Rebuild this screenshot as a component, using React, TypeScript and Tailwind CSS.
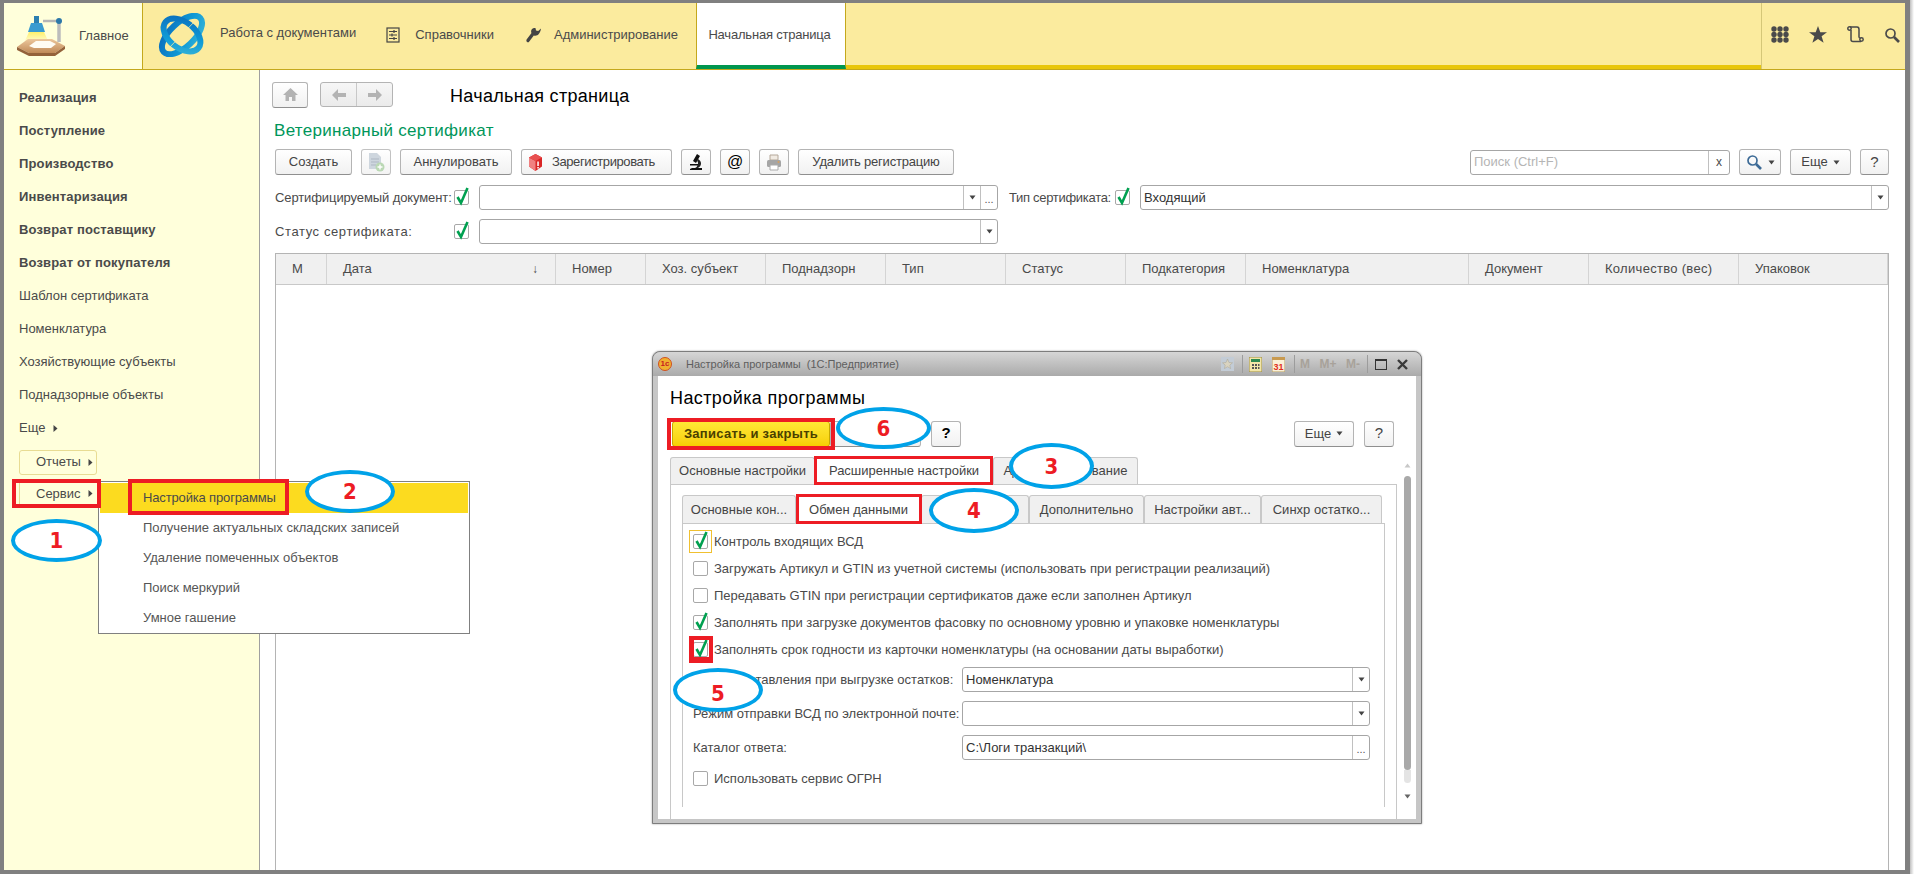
import { ReactNode } from "react";

const Caret = ({ className = "text-[#444]" }: { className?: string }) => (
  <svg width="7" height="5" viewBox="0 0 7 5" className={className}>
    <path d="M0.5 0.5h6L3.5 4.5z" fill="currentColor" />
  </svg>
);

const CaretRight = () => (
  <svg width="5" height="7" viewBox="0 0 5 7" className="text-[#444]">
    <path d="M0.5 0v7L4.5 3.5z" fill="currentColor" />
  </svg>
);

const CheckBox = ({ checked = false, className = "" }: { checked?: boolean; className?: string }) => (
  <span className={`relative block w-[15px] h-[15px] shrink-0 rounded-[2px] border border-[#a8a8a8] bg-white ${className}`}>
    {checked && (
      <svg width="17" height="20" viewBox="0 0 17 20" className="absolute left-[-1px] top-[-5px]">
        <path d="M3.500 11l3.500 6L13.500 2" fill="none" stroke="#00a050" strokeWidth="2.600" />
      </svg>
    )}
  </span>
);

const Btn = ({ className = "", children }: { className?: string; children: ReactNode }) => (
  <div
    className={`flex items-center justify-center shrink-0 h-[26px] rounded-[3px] border border-[#b4b4b4] border-b-[#8f8f8f] bg-gradient-to-b from-white to-[#f1f1f1] text-[#444] ${className}`}
  >
    {children}
  </div>
);

const Field = ({ className = "", value = "", kinds }: { className?: string; value?: string; kinds: string[] }) => (
  <div className={`flex h-[25px] items-stretch rounded-[3px] border border-[#a6a6a6] bg-white ${className}`}>
    <div className="flex-1 flex items-center pl-[3px] text-[#333]">{value}</div>
    {kinds.map((k) => (
      <div key={k} className="w-[17px] flex items-center justify-center border-l border-[#c0c0c0]">
        {k === "arrow" ? <Caret /> : <span className="text-[#555] text-[11px] leading-none mt-[4px]">...</span>}
      </div>
    ))}
  </div>
);

const Ellipse = ({ className, children }: { className: string; children: ReactNode }) => (
  <div
    className={`absolute flex items-center justify-center rounded-[50%] border-[4px] border-[#00a2e8] bg-white text-[#ed1c24] text-[22px] font-bold tracking-normal font-['DejaVu_Sans_Condensed','DejaVu_Sans',sans-serif] ${className}`}
  >
    {children}
  </div>
);

const Lamp = () => (
  <svg width="50" height="42" viewBox="0 0 50 42">
    <defs>
      <linearGradient id="wood" x1="0" y1="0" x2="0" y2="1">
        <stop offset="0" stopColor="#ecc79c" />
        <stop offset="1" stopColor="#c08a58" />
      </linearGradient>
      <linearGradient id="glow" x1="0" y1="0" x2="0" y2="1">
        <stop offset="0" stopColor="#fff06a" />
        <stop offset="1" stopColor="#fffde0" />
      </linearGradient>
    </defs>
    <path d="M27 6h16" stroke="#b5b5b5" strokeWidth="2.500" fill="none" />
    <path d="M43 6v21" stroke="#bcbcbc" strokeWidth="3.500" fill="none" />
    <circle cx="43" cy="6" r="3" fill="#2c78a8" />
    <path d="M18 1h5v7h-5z" fill="#2c7fb0" />
    <path d="M15 8h11l3 9H12z" fill="#3a9bd0" />
    <path d="M13 17h15l5 11H8z" fill="url(#glow)" />
    <path d="M1 32L12 24h24l13 7-10 7H13z" fill="url(#wood)" />
    <path d="M1 32l12 6h26l10-7v3l-10 7H13L1 35z" fill="#94623a" />
    <path d="M13 31l7-5h14l6 3-5 4H18z" fill="#fffdf4" />
  </svg>
);

const Orbit = () => (
  <svg width="48" height="44" viewBox="0 0 48 44">
    <defs>
      <linearGradient id="blue" x1="0" y1="0" x2="1" y2="1">
        <stop offset="0" stopColor="#0a6cbc" />
        <stop offset="0.6" stopColor="#0f9ad6" />
        <stop offset="1" stopColor="#38b4d6" />
      </linearGradient>
    </defs>
    <g fill="none" stroke="url(#blue)">
      <ellipse cx="24" cy="22" rx="25" ry="12" strokeWidth="6" transform="rotate(-43 24 22)" />
      <ellipse cx="24" cy="22" rx="21" ry="13" strokeWidth="6" transform="rotate(38 24 22)" />
    </g>
    <path d="M38 7L11 35" stroke="#fbeb9e" strokeWidth="0.800" />
  </svg>
);

const Directory = () => (
  <svg width="14" height="16" viewBox="0 0 14 16" fill="none" stroke="#444" strokeWidth="1.200">
    <rect x="1" y="1" width="12" height="14" />
    <path d="M3 4.500h8M3 8h8M3 11.500h8M8 3v3M6 6.500v3M8 10v3" />
  </svg>
);

const Wrench = () => (
  <svg width="16" height="16" viewBox="0 0 16 16">
    <path d="M15 1.500l-2.800 2.600-2.200-.6L9.600 1.200C7.500 0.300 5 1.800 5.100 4.400c0 .7.200 1.200.4 1.700L0.600 12.600c-.7 1 .2 3 2.100 2.600l5.100-6.700c3.500 1 6.400-1.500 7.200-7z" fill="#444" />
  </svg>
);

const DocPlus = () => (
  <svg width="18" height="20" viewBox="0 0 18 20">
    <path d="M2 1h8l4 4v12H2z" fill="#c3ccd6" />
    <path d="M4 7h8M4 10h8M4 13h5" stroke="#9aa7b5" />
    <circle cx="13" cy="15" r="4.500" fill="#a9cfa2" />
    <path d="M13 12.500v5M10.500 15h5" stroke="#fff" strokeWidth="1.400" />
  </svg>
);

const RedCube = () => (
  <svg width="15" height="17" viewBox="0 0 15 17">
    <path d="M7.500 0L14 3.500v9L7.500 17 1 12.500v-9z" fill="#d92525" />
    <path d="M1 3.500L7.500 7v10L1 12.500z" fill="#f08080" />
    <path d="M7.500 7L14 3.500 7.500 0 1 3.500z" fill="#e85050" />
    <path d="M9.300 7.500h1.500v4.500H9.300zM9.300 13h1.500v1.500H9.300z" fill="#fff" />
  </svg>
);

const Microscope = () => (
  <svg width="14" height="16" viewBox="0 0 14 16">
    <path d="M8 0l3 2-4 7-3-2zM3 14h10v2H1v-1z" fill="#111" />
    <path d="M9 5c4 2 4 7 0 9H6c3-1 4-6 2-7z" fill="#222" />
    <path d="M1 10h8v1.500H1z" fill="#111" />
  </svg>
);

const Printer = () => (
  <svg width="16" height="17" viewBox="0 0 16 17">
    <path d="M4 1h8v5H4z" fill="#f1ebe3" stroke="#b5a89a" />
    <rect x="1" y="6" width="14" height="7" rx="1.500" fill="#a5a5a5" />
    <path d="M4 11h8v5H4z" fill="#fff" stroke="#aaa" />
    <circle cx="12.500" cy="8" r="1" fill="#d8a060" />
  </svg>
);

const HomeIcon = () => (
  <svg width="15" height="15" viewBox="0 0 15 15">
    <path d="M7.500 1L15 8h-2.500v6h-3.500v-4H6v4H2.500V8H0z" fill="#b3b3b3" />
  </svg>
);

const ArrowIcon = ({ flip = false }: { flip?: boolean }) => (
  <svg width="14" height="12" viewBox="0 0 14 12" className={flip ? "rotate-180" : ""}>
    <path d="M0 6l6-6v4h8v4H6v4z" fill="#b3b3b3" />
  </svg>
);

const SearchIcon = ({ color = "#4a4a4a" }: { color?: string }) => (
  <svg width="16" height="16" viewBox="0 0 16 16" fill="none" stroke={color}>
    <circle cx="6.500" cy="6.500" r="4.500" strokeWidth="1.700" />
    <path d="M10 10l5 5" strokeWidth="2.600" />
  </svg>
);

const Grid = () => (
  <svg width="18" height="17" viewBox="0 0 18 17" fill="#4a4a4a">
    {[3, 9, 15].map((x) => [3, 8.5, 14].map((y) => <circle key={`${x}-${y}`} cx={x} cy={y} r="2.700" />))}
  </svg>
);

const Star = () => (
  <svg width="18" height="17" viewBox="0 0 18 17">
    <path d="M9 0l2.300 6.200H18l-5.400 4 2 6.600L9 13l-5.600 3.800 2-6.600-5.400-4h6.700z" fill="#4a4a4a" />
  </svg>
);

const Scroll = () => (
  <svg width="17" height="17" viewBox="0 0 17 17" fill="none" stroke="#4a4a4a" strokeWidth="1.500">
    <circle cx="2.500" cy="2.500" r="1.700" />
    <circle cx="14.500" cy="13.500" r="1.700" />
    <path d="M3 1h7c1.500 0 2 1 2 2.500V11c0 1 1 1 1.500 1M4 4v9.500C4 15 5 15.500 6 15.500h8" />
  </svg>
);

const columns = [
  { title: "М", cls: "w-[51px]" },
  { title: "Дата", cls: "w-[229px] justify-between pr-[17px]", extra: "↓" },
  { title: "Номер", cls: "w-[90px]" },
  { title: "Хоз. субъект", cls: "w-[120px]" },
  { title: "Поднадзорн", cls: "w-[120px]" },
  { title: "Тип", cls: "w-[120px]" },
  { title: "Статус", cls: "w-[120px]" },
  { title: "Подкатегория", cls: "w-[120px]" },
  { title: "Номенклатура", cls: "w-[223px]" },
  { title: "Документ", cls: "w-[120px]" },
  { title: "Количество (вес)", cls: "w-[150px] tracking-[0.3px]" },
  { title: "Упаковок", cls: "flex-1" },
];

const sideBold = ["Реализация", "Поступление", "Производство", "Инвентаризация", "Возврат поставщику", "Возврат от покупателя"];
const sideNormal = ["Шаблон сертификата", "Номенклатура", "Хозяйствующие субъекты", "Поднадзорные объекты"];
const menuItems = ["Получение актуальных складских записей", "Удаление помеченных объектов", "Поиск меркурий", "Умное гашение"];

const checks = [
  { text: "Загружать Артикул и GTIN из учетной системы (использовать при регистрации реализаций)", on: false },
  { text: "Передавать GTIN при регистрации сертификатов даже если заполнен Артикул", on: false },
  { text: "Заполнять при загрузке документов фасовку по основному уровню и упаковке номенклатуры", on: true },
];

const Tab = ({ className, children }: { className: string; children?: ReactNode }) => (
  <div className={`flex items-center justify-center border border-b-0 border-[#c8c8c8] bg-[#f0f0f0] rounded-t-[3px] text-[#444] ${className}`}>
    {children}
  </div>
);

const Dialog = () => (
  <div className="absolute left-[652px] top-[351px] w-[770px] h-[473px] flex flex-col rounded-t-[8px] border border-[#7d7d7d] bg-[#c6c6c6] shadow-[0_0_2px_#999]">
    <div className="h-[24px] flex items-center pl-[5px] pr-[13px] rounded-t-[8px] bg-gradient-to-b from-[#d6d6d6] to-[#aaaaaa] text-[#5e5e5e] text-[11px] shrink-0">
      <span className="w-[14px] h-[14px] rounded-full bg-[#f0b030] border border-[#d05020] flex items-center justify-center text-[#c82020] text-[8px] font-bold mr-[14px]">1с</span>
      <span>Настройка программы &nbsp;(1С:Предприятие)</span>
      <div className="ml-auto flex items-center">
        <svg width="13" height="14" viewBox="0 0 13 14">
          <rect width="13" height="14" fill="#c3ccd6" />
          <path d="M6.500 2l1.500 3.500 3.500.3-2.700 2.300.8 3.500-3.100-1.900-3.100 1.900.8-3.500L1.500 5.800 5 5.500z" fill="#d9d3c0" stroke="#a9a595" strokeWidth=".5" />
        </svg>
        <span className="w-px h-[18px] bg-[#9c9c9c] ml-[8px]" />
        <svg width="13" height="15" viewBox="0 0 13 15" className="ml-[6px]">
          <rect width="13" height="15" fill="#f2e6a8" stroke="#9a8a40" />
          <rect x="2" y="2" width="9" height="3" fill="#2e8a50" />
          <path d="M3 7h2v2H3zM6 7h2v2H6zM9 7h1.500v2H9zM3 10h2v2H3zM6 10h2v2H6zM9 10h1.500v2H9z" fill="#555" />
        </svg>
        <svg width="13" height="15" viewBox="0 0 13 15" className="ml-[10px]">
          <rect width="13" height="15" fill="#fbf1d8" stroke="#b39a60" />
          <rect width="13" height="3" fill="#c89a50" />
          <text x="1.500" y="13" fontSize="9" fontWeight="700" fill="#e03020" fontFamily="Liberation Sans, sans-serif">31</text>
        </svg>
        <span className="w-px h-[18px] bg-[#9c9c9c] ml-[9px]" />
        <span className="text-[#a8a29a] text-[12px] font-bold flex justify-between w-[60px] ml-[5px] tracking-normal">
          <span>M</span>
          <span>M+</span>
          <span>M-</span>
        </span>
        <span className="w-px h-[18px] bg-[#9c9c9c] ml-[7px]" />
        <span className="w-[12px] h-[11px] border border-[#333] border-t-[2px] ml-[7px]" />
        <svg width="11" height="11" viewBox="0 0 11 11" className="ml-[10px]">
          <path d="M1 1l9 9M10 1l-9 9" stroke="#3a3a3a" strokeWidth="2.400" />
        </svg>
      </div>
    </div>
    <div className="relative flex-1 mx-[5px] mb-[4px] bg-white flex flex-col pl-[12px] pr-[19px] min-h-0">
      <div className="h-[22px] mt-[11px] text-[18px] leading-[22px] text-black tracking-[0.4px]">Настройка программы</div>
      <div className="flex items-center mt-[11px] pl-[2px] pr-[3px] h-[27px]">
        <div className="w-[158px] h-[26px] flex items-center justify-center rounded-[3px] border border-[#c8a800] bg-gradient-to-b from-[#ffe934] to-[#f7cf00] font-bold text-[#4a3f00] tracking-[0.3px]">
          Записать и закрыть
        </div>
        <Btn className="w-[91px]">{" "}</Btn>
        <Btn className="w-[30px] ml-[10px] font-bold text-black text-[15px]">?</Btn>
        <Btn className="w-[60px] ml-auto gap-[5px]">
          Еще <Caret />
        </Btn>
        <Btn className="w-[30px] ml-[10px] text-[15px]">?</Btn>
      </div>
      <div className="flex mt-[10px] h-[27px]">
        <Tab className="w-[145px]">Основные настройки</Tab>
        <Tab className="w-[178px] bg-white">Расширенные настройки</Tab>
        <Tab className="w-[145px]">Администрирование</Tab>
      </div>
      <div className="flex-1 border-x border-t border-[#c8c8c8] px-[11px] pt-[10px] pb-[12px] flex flex-col min-h-0">
        <div className="flex h-[28px] shrink-0">
          <Tab className="w-[114px]">Основные кон...</Tab>
          <Tab className="w-[125px] bg-white">Обмен данными</Tab>
          <Tab className="w-[108px]"> </Tab>
          <Tab className="w-[115px]">Дополнительно</Tab>
          <Tab className="w-[117px]">Настройки авт...</Tab>
          <Tab className="w-[121px]">Синхр остатко...</Tab>
        </div>
        <div className="flex-1 border-x border-t border-[#c8c8c8] pl-[10px] pr-[14px] pt-[4px] flex flex-col min-h-0">
          <div className="flex items-center gap-[6px] h-[27px] relative">
            <span className="absolute left-[-4px] top-[2px] w-[23px] h-[23px] border border-[#f0c030]" />
            <CheckBox checked />
            <span>Контроль входящих ВСД</span>
          </div>
          {checks.map((c) => (
            <div key={c.text} className="flex items-center gap-[6px] h-[27px]">
              <CheckBox checked={c.on} />
              <span>{c.text}</span>
            </div>
          ))}
          <div className="flex items-center gap-[6px] h-[27px]">
            <CheckBox checked />
            <span>Заполнять срок годности из карточки номенклатуры (на основании даты выработки)</span>
          </div>
          <div className="flex items-center h-[25px] mt-[4px]">
            <span className="w-[269px] shrink-0 whitespace-nowrap">Вид представления при выгрузке остатков:</span>
            <Field className="flex-1" value="Номенклатура" kinds={["arrow"]} />
          </div>
          <div className="flex items-center h-[25px] mt-[9px]">
            <span className="w-[269px] shrink-0 whitespace-nowrap">Режим отправки ВСД по электронной почте:</span>
            <Field className="flex-1" kinds={["arrow"]} />
          </div>
          <div className="flex items-center h-[25px] mt-[9px]">
            <span className="w-[269px] shrink-0">Каталог ответа:</span>
            <Field className="flex-1" value="C:\Логи транзакций\" kinds={["dots"]} />
          </div>
          <div className="flex items-center gap-[6px] h-[27px] mt-[5px]">
            <CheckBox />
            <span>Использовать сервис ОГРН</span>
          </div>
        </div>
      </div>
      {/* scrollbar */}
      <div className="absolute right-[5px] top-[87px] bottom-[20px] w-[8px] flex flex-col items-center">
        <Caret className="text-[#c8c8c8] rotate-180" />
        <div className="mt-[8px] w-[7px] h-[294px] rounded-[4px] bg-[#a9a9a9]" />
        <div className="w-[7px] h-[13px] rounded-b-[4px] bg-[#e4e4e4]" />
        <div className="mt-auto">
          <Caret className="text-[#666]" />
        </div>
      </div>
      {/* annotations */}
      <div className="absolute left-[9px] top-[42px] w-[168px] h-[32px] border-[4px] border-[#ed1c24]" />
      <div className="absolute left-[156px] top-[80px] w-[179px] h-[29px] border-[3px] border-[#ed1c24]" />
      <div className="absolute left-[138px] top-[118px] w-[126px] h-[30px] border-[3px] border-[#ed1c24]" />
      <div className="absolute left-[31px] top-[260px] w-[24px] h-[27px] border-t-[4px] border-b-[6px] border-l-[5px] border-r-[4px] border-[#ed1c24]" />
      <Ellipse className="left-[178px] top-[31px] w-[95px] h-[42px]">6</Ellipse>
      <Ellipse className="left-[351px] top-[67px] w-[85px] h-[46px]">3</Ellipse>
      <Ellipse className="left-[271px] top-[112px] w-[90px] h-[45px]">4</Ellipse>
      <Ellipse className="left-[15px] top-[292px] w-[90px] h-[44px] pt-[6px]">5</Ellipse>
    </div>
  </div>
);

export default function App() {
  return (
    <div className="relative w-[1914px] h-[874px] flex bg-[#808080] overflow-hidden font-['Liberation_Sans',Arial,sans-serif] text-[13px] text-[#4a4a4a]">
      <div className="w-[1901px] h-[867px] mt-[3px] ml-[4px] mr-[5px] shrink-0 flex flex-col bg-white">
        <header className="h-[67px] shrink-0 flex border-b border-[#c4a81c] bg-[#fbeb9e]">
          <div className="w-[139px] shrink-0 flex items-center bg-[#ffffdb] border-r border-[#c4a81c] pl-[12px]">
            <Lamp />
            <span className="ml-[13px]">Главное</span>
          </div>
          <div className="flex-1 flex items-stretch">
            <div className="flex items-center w-[553px] pb-[3px]">
              <div className="ml-[15px] w-[48px]">
                <Orbit />
              </div>
              <span className="ml-[14px] mt-[-3px]">Работа с документами</span>
              <span className="ml-[30px]">
                <Directory />
              </span>
              <span className="ml-[15px]">Справочники</span>
              <span className="ml-[32px]">
                <Wrench />
              </span>
              <span className="ml-[12px]">Администрирование</span>
            </div>
            <div className="w-[150px] flex items-center justify-center bg-white border-x border-[#c4a81c] border-b-[4px] border-b-[#00964f] pt-[1px] tracking-[-0.2px] pr-[3px]">
              Начальная страница
            </div>
            <div className="flex-1 border-b-[4px] border-b-[#e8c60c]" />
            <div className="w-[144px] flex items-center border-l border-[#d5c778] pl-[9px] gap-[20px] pb-[3px]">
              <Grid />
              <Star />
              <Scroll />
              <SearchIcon />
            </div>
          </div>
        </header>

        <div className="flex-1 flex min-h-0">
          <aside className="relative w-[256px] shrink-0 bg-[#ffffdb] border-r border-[#a0a0a0] pt-[11px] pl-[15px] text-[13px]">
            {sideBold.map((s) => (
              <div key={s} className="h-[33px] flex items-center font-bold tracking-[0.15px]">
                {s}
              </div>
            ))}
            {sideNormal.map((s) => (
              <div key={s} className="h-[33px] flex items-center">
                {s}
              </div>
            ))}
            <div className="h-[34px] flex items-center gap-[8px]">
              Еще <CaretRight />
            </div>
            <div className="h-[34px] flex items-center">
              <div className="w-[78px] h-[25px] flex items-center pl-[16px] gap-[7px] rounded-[3px] border border-[#e8dc93]">
                Отчеты <CaretRight />
              </div>
            </div>
            <div className="h-[29px] flex items-center">
              <div className="w-[78px] h-[25px] flex items-center pl-[16px] gap-[7px] border-l border-[#e8dc93]">
                Сервис <CaretRight />
              </div>
            </div>
          </aside>

          <main className="flex-1 flex flex-col min-w-0 pl-[15px] pr-[16px]">
            <div className="flex items-center h-[25px] mt-[12px] ml-[-3px]">
              <Btn className="w-[36px] h-[25px] from-[#f6f6f6] to-[#ebebeb]">
                <HomeIcon />
              </Btn>
              <div className="flex ml-[12px] w-[73px] h-[25px] rounded-[3px] border border-[#b4b4b4] bg-gradient-to-b from-[#f6f6f6] to-[#ebebeb]">
                <div className="flex-1 flex items-center justify-center border-r border-[#c8c8c8]">
                  <ArrowIcon />
                </div>
                <div className="flex-1 flex items-center justify-center">
                  <ArrowIcon flip />
                </div>
              </div>
              <h1 className="ml-[57px] mt-[4px] text-[18px] text-black tracking-[0.3px]">Начальная страница</h1>
            </div>
            <div className="h-[22px] mt-[13px] text-[17px] leading-[22px] text-[#00965a] ml-[-1px] tracking-[0.3px]">Ветеринарный сертификат</div>

            <div className="flex items-center h-[26px] mt-[7px]">
              <Btn className="w-[77px]">Создать</Btn>
              <Btn className="w-[30px] ml-[9px] opacity-80">
                <DocPlus />
              </Btn>
              <Btn className="w-[112px] ml-[9px]">Аннулировать</Btn>
              <Btn className="w-[151px] ml-[9px] gap-[9px] justify-start pl-[6px] tracking-[-0.4px]">
                <RedCube />
                Зарегистрировать
              </Btn>
              <Btn className="w-[30px] ml-[9px]">
                <Microscope />
              </Btn>
              <Btn className="w-[30px] ml-[9px] text-[16px] text-black">@</Btn>
              <Btn className="w-[30px] ml-[9px]">
                <Printer />
              </Btn>
              <Btn className="w-[156px] ml-[9px] tracking-[-0.2px]">Удалить регистрацию</Btn>
              <div className="flex h-[25px] w-[260px] ml-auto rounded-[3px] border border-[#a6a6a6]">
                <div className="flex-1 flex items-center pl-[3px] text-[#b5b5b5]">Поиск (Ctrl+F)</div>
                <div className="w-[21px] flex items-center justify-center border-l border-[#c0c0c0] text-[12px] leading-none">x</div>
              </div>
              <Btn className="w-[42px] ml-[9px] gap-[6px]">
                <SearchIcon color="#3c6a96" />
                <Caret />
              </Btn>
              <Btn className="w-[61px] ml-[9px] gap-[5px]">
                Еще <Caret />
              </Btn>
              <Btn className="w-[29px] ml-[9px] text-[15px]">?</Btn>
            </div>

            <div className="flex items-center h-[25px] mt-[10px]">
              <span className="w-[179px] shrink-0 whitespace-nowrap tracking-[-0.1px]">Сертифицируемый документ:</span>
              <CheckBox checked />
              <Field className="w-[519px] ml-[10px]" kinds={["arrow", "dots"]} />
              <span className="ml-[11px] w-[106px] shrink-0 whitespace-nowrap tracking-[-0.3px]">Тип сертификата:</span>
              <CheckBox checked />
              <Field className="flex-1 ml-[10px]" value="Входящий" kinds={["arrow"]} />
            </div>
            <div className="flex items-center h-[25px] mt-[9px]">
              <span className="w-[179px] shrink-0 tracking-[0.6px]">Статус сертификата:</span>
              <CheckBox checked />
              <Field className="w-[519px] ml-[10px]" kinds={["arrow"]} />
            </div>

            <div className="flex-1 mt-[9px] border border-b-0 border-[#b4b4b4] min-h-0">
              <div className="flex h-[31px] bg-[#f0f0f0] border-b border-[#c8c8c8]">
                {columns.map((c) => (
                  <div key={c.title} className={`flex items-center pl-[16px] border-r border-[#d4d4d4] ${c.cls}`}>
                    <span>{c.title}</span>
                    {c.extra && <span className="text-[12px]">{c.extra}</span>}
                  </div>
                ))}
              </div>
            </div>
          </main>
        </div>
      </div>
      <div className="w-[4px] h-full bg-gradient-to-r from-[#c0c0c0] to-white" />

      <Dialog />

      {/* dropdown */}
      <div className="absolute left-[98px] top-[481px] w-[372px] h-[153px] border border-[#808080] bg-white p-[1px]">
        <div className="h-[30px] flex items-center pl-[43px] bg-[#fcdb1f] tracking-[-0.15px]">Настройка программы</div>
        {menuItems.map((m) => (
          <div key={m} className="h-[30px] flex items-center pl-[43px] text-[#555]">
            {m}
          </div>
        ))}
      </div>

      {/* annotations */}
      <div className="absolute left-[12px] top-[479px] w-[89px] h-[29px] border-[4px] border-[#ed1c24]" />
      <div className="absolute left-[128px] top-[479px] w-[161px] h-[36px] border-[4px] border-[#ed1c24]" />
      <Ellipse className="left-[11px] top-[519px] w-[91px] h-[43px]">1</Ellipse>
      <Ellipse className="left-[305px] top-[470px] w-[90px] h-[43px]">2</Ellipse>
    </div>
  );
}
